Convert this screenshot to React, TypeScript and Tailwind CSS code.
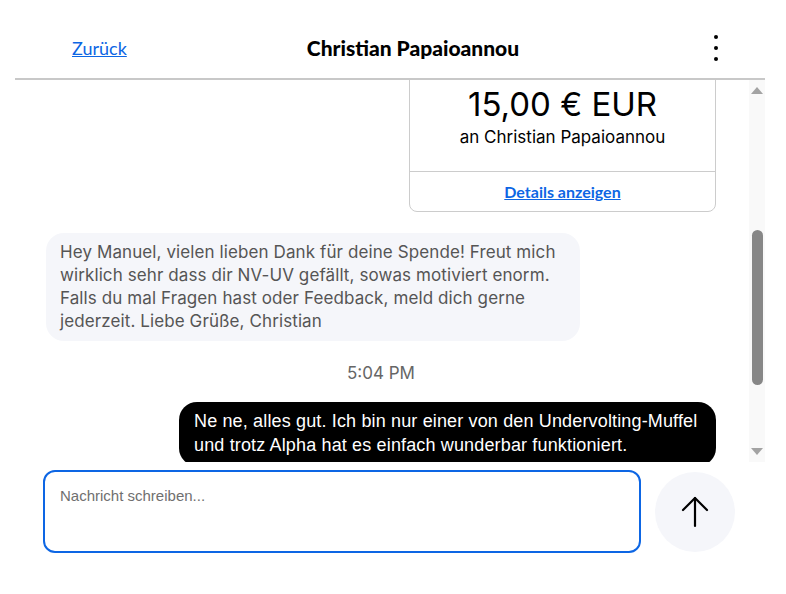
import React from "react";

export default function App() {
  return (
    <div className="w-[786px] h-[594px] bg-white flex flex-col overflow-hidden" style={{ fontFamily: "Inter, 'Liberation Sans', sans-serif" }}>
      {/* Header */}
      <div className="ml-[15px] mr-[21px] h-[80px] border-b-2 border-[#c8c8c8] flex items-center pt-[18px] shrink-0">
        <a href="#" className="ml-[57px] text-[18px] text-[#0d66e4] underline" style={{ fontFamily: "Lato, sans-serif" }}>Zurück</a>
        <div className="ml-[180px] text-[21px] font-black text-black" style={{ fontFamily: "Lato, sans-serif" }}>Christian Papaioannou</div>
        <div className="ml-auto mr-[47px] flex flex-col gap-[7px] items-center">
          <span className="block w-[4px] h-[4px] rounded-full bg-black" />
          <span className="block w-[4px] h-[4px] rounded-full bg-black" />
          <span className="block w-[4px] h-[4px] rounded-full bg-black" />
        </div>
      </div>

      {/* Messages */}
      <div className="ml-[15px] mr-[21px] h-[382px] flex shrink-0">
        <div className="flex-1 overflow-hidden pl-[31px] pr-[33px]">
          <div className="flex flex-col -mt-[40px]">
            <div className="self-end w-[307px] border border-[#cccccc] rounded-b-[8px] flex flex-col">
              <div className="h-[130px] flex flex-col items-center justify-end pb-[23px]">
                <div className="text-[33px] leading-[40px] text-black">15,00 € EUR</div>
                <div className="text-[17px] leading-[22px] mt-[2px] text-black">an Christian Papaioannou</div>
              </div>
              <div className="border-t border-[#cccccc] h-[40px] flex items-center justify-center">
                <a href="#" className="text-[16px] font-bold text-[#0d66e4] underline" style={{ fontFamily: "Lato, sans-serif" }}>Details anzeigen</a>
              </div>
            </div>

            <div className="mt-[21px] self-start w-[534px] bg-[#f5f6fa] rounded-[18px] px-[14px] py-[8px] text-[17px] leading-[23px] text-[#555555] tracking-[0.1px]">
              Hey Manuel, vielen lieben Dank für deine Spende! Freut mich<br />
              wirklich sehr dass dir NV-UV gefällt, sowas motiviert enorm.<br />
              Falls du mal Fragen hast oder Feedback, meld dich gerne<br />
              jederzeit. Liebe Grüße, Christian
            </div>

            <div className="mt-[20px] text-center text-[17px] leading-[24px] text-[#666666]">5:04 PM</div>

            <div className="mt-[17px] self-end w-[537px] bg-black rounded-[18px] px-[15px] pt-[7px] pb-[9px] text-[18px] leading-[24px] text-white tracking-[0.15px]" style={{ fontFamily: "'Liberation Sans', Arial, sans-serif" }}>
              Ne ne, alles gut. Ich bin nur einer von den Undervolting-Muffel<br />
              und trotz Alpha hat es einfach wunderbar funktioniert.
            </div>
          </div>
        </div>
        {/* Scrollbar */}
        <div className="w-[16px] bg-[#f9f9f9] flex flex-col items-center justify-between py-[7px]">
          <svg width="12" height="7" viewBox="0 0 12 7"><polygon points="6,0 12,7 0,7" fill="#a3a3a3" /></svg>
          <div className="flex-1 w-full flex flex-col items-center pt-[136px]">
            <div className="w-[11px] h-[155px] rounded-full bg-[#878787]" />
          </div>
          <svg width="12" height="7" viewBox="0 0 12 7"><polygon points="0,0 12,0 6,7" fill="#a3a3a3" /></svg>
        </div>
      </div>

      {/* Input */}
      <div className="flex items-center mt-[8px] pl-[43px]">
        <div className="w-[598px] h-[83px] border-2 border-[#0d66e4] rounded-[12px] px-[15px] pt-[13px] text-[15px] text-[#6f6f6f]" style={{ fontFamily: "'Liberation Sans', Arial, sans-serif" }}>
          Nachricht schreiben...
        </div>
        <button className="ml-[14px] w-[80px] h-[80px] rounded-full bg-[#f5f6fa] flex items-center justify-center">
          <svg width="28" height="32" viewBox="0 0 28 32" fill="none" stroke="black" strokeWidth="2.2" strokeLinecap="round" strokeLinejoin="round">
            <line x1="14" y1="2" x2="14" y2="30" />
            <polyline points="2,14 14,2 26,14" />
          </svg>
        </button>
      </div>
    </div>
  );
}
